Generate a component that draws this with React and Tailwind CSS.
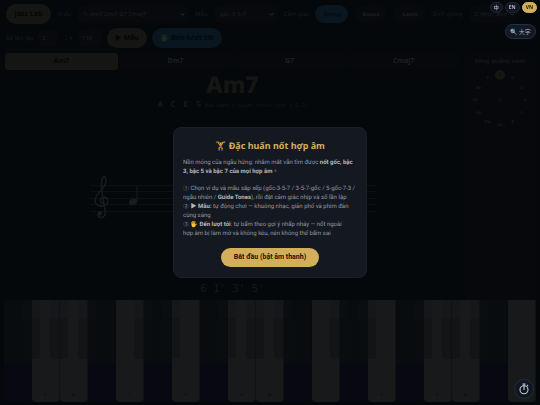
import React, { useState } from 'react';

const LANGS = ['中', 'EN', 'VN'];
const CHORDS = ['Am7', 'Dm7', 'G7', 'Cmaj7'];
const FEELS = ['Swing', 'Bossa', 'Latin'];
const FIFTHS = ['C', 'G', 'D', 'A', 'E', 'B', 'Gb', 'Db', 'Ab', 'Eb', 'Bb', 'F'];
const WHITE_KEYS = 'FGABCDEFGABCDEFGABC'.split('');
const CHORD_TONES = ['A', 'C', 'E', 'G'];
const DEGREES = ['6', "1'", "3'", "5'"];

const Select = ({ id, label, width, options }) => (
  <div className="flex items-center gap-1.5">
    <label htmlFor={id} className="text-[#181c20]">{label}</label>
    <div className={`relative ${width}`}>
      <select
        id={id}
        className="h-[18px] w-full appearance-none rounded-md bg-[#07090d] pl-1.5 text-[#1e2023]"
      >
        {options.map(o => <option key={o}>{o}</option>)}
      </select>
      <svg viewBox="0 0 6 4" className="pointer-events-none absolute right-1 top-2 h-[3px] w-[5px]">
        <path d="M.5.5 3 3 5.5.5" fill="none" stroke="#303236" strokeWidth="1.2" />
      </svg>
    </div>
  </div>
);

const Toolbar = () => {
  const [feel, setFeel] = useState('Swing');

  return (
    <div className="px-1.5 pt-1 text-[6px]">
      <div className="flex h-5 items-center gap-1.5 whitespace-nowrap">
        <button className="h-5 w-[45px] shrink-0 rounded-full bg-[#151513] text-[7px] font-bold text-[#050607]">
          Jazz Lab
        </button>
        <Select id="example" label="Ví dụ" width="w-28" options={['1: Am7 Dm7 G7 Cmaj7']} />
        <Select id="pattern" label="Mẫu" width="w-16" options={['gốc-3-5-7', '3-5-7-gốc', '5-gốc-7-3']} />
        <span className="text-[#181c20]">Cảm giác</span>
        {FEELS.map(f => (
          <button
            key={f}
            onClick={() => setFeel(f)}
            className={`h-[18px] w-[33px] shrink-0 rounded-full ${
              feel === f ? 'bg-[#09161f] text-[#03070a]' : 'bg-[#07090c] font-bold text-[#1c1e21]'
            }`}
          >
            {f}
          </button>
        ))}
        <Select id="transpose" label="Dịch giọng" width="w-[50px]" options={['C (thực âm)']} />
      </div>
      <div className="mt-1 flex h-5 items-center gap-[5px]">
        <label htmlFor="repeats" className="text-[#181c20]">Số lần lặp</label>
        <input id="repeats" defaultValue="2" className="h-[18px] w-5 rounded-md bg-[#07090d] pl-1 text-[#1e2023]" />
        <label htmlFor="tempo" className="text-[#181c20]">♩=</label>
        <input id="tempo" defaultValue="110" className="h-[18px] w-6 rounded-md bg-[#07090d] pl-1 text-[#1e2023]" />
        <button className="h-5 w-10 rounded-full bg-[#151513] text-[7px] font-bold text-[#050607]">
          ▶ Mẫu
        </button>
        <button className="h-5 w-[70px] rounded-full bg-[#09161f] text-[7px] font-bold text-[#03080c]">
          <span className="opacity-10">🖐</span> Đến lượt tôi
        </button>
      </div>
    </div>
  );
};

const Staff = () => (
  <svg viewBox="0 0 286 50" className="mt-16 h-[50px] w-[286px]" aria-label="A">
    {[9, 15, 22, 28, 35].map(y => (
      <path key={y} d={`M0 ${y}.5H286`} stroke="#0c1013" />
    ))}
    <g fill="none" stroke="#191c1f" strokeLinecap="round">
      <path d="M13 27C10 27 9 23 12.500 21.500C17 20 19.500 25 16.500 28.500C13 32 5 30 5 24C5 17 16 13 16 5C16 1 14.500-.5 13 1.500C10 6 11.500 12 12.500 19L15 34C16 39 14 41.500 11 41.500C8 41.500 7 38.500 8.500 37" strokeWidth="1.500" />
    </g>
    <circle cx="10" cy="37.500" r="2.200" fill="#191c1f" />
    <path d="M47 10V26" stroke="#191c1f" />
    <ellipse cx="43" cy="26" rx="4.200" ry="3.200" transform="rotate(-18 43 26)" fill="#191c1f" />
  </svg>
);

const CircleOfFifths = () => (
  <aside className="flex w-[71px] shrink-0 flex-col items-center rounded-md bg-[#06080b] pt-1">
    <h2 className="whitespace-nowrap text-[6px] font-bold leading-[8px] text-[#15171a]">Vòng quãng năm</h2>
    <svg viewBox="0 0 62 62" className="w-[62px]" fontSize="4" fontWeight="700" textAnchor="middle">
      <circle cx="31" cy="10" r="5" fill="#161613" />
      {FIFTHS.map((note, i) => {
        const angle = (i * Math.PI) / 6;
        return (
          <text
            key={note}
            x={31 + 25 * Math.sin(angle)}
            y={36 - 25 * Math.cos(angle)}
            fill={i === 0 ? '#07080a' : '#17191c'}
          >
            {note}
          </text>
        );
      })}
      <text x="31" y="37" fill="#17191c">C</text>
    </svg>
  </aside>
);

const Piano = () => (
  <div className="flex h-[102px] px-1">
    {WHITE_KEYS.map((note, i) => {
      const active = CHORD_TONES.includes(note);
      const hasSharp = 'FGACD'.includes(note) && i < WHITE_KEYS.length - 1;
      return (
        <button
          key={i}
          aria-label={note}
          className={`relative flex flex-1 items-end justify-center rounded-b-sm border-r pb-1 text-[4px] ${
            active
              ? 'border-[#101213] bg-[#18191a] text-[#0c0d0e]'
              : 'border-[#07090c] bg-linear-to-b from-[#080c0e] from-62% to-[#080812] to-62% text-transparent'
          }`}
        >
          {note}
          {hasSharp && (
            <span className="absolute -right-[9px] top-0 z-10 h-[59px] w-[18px] rounded-b-sm bg-linear-to-b from-[#101118]/25 from-30% to-[#0c0d10]/40 to-30%" />
          )}
        </button>
      );
    })}
  </div>
);

const IntroDialog = ({ onStart }) => (
  <div className="fixed inset-0 z-20 flex items-center justify-center">
    <div
      role="dialog"
      aria-labelledby="intro-title"
      className="w-[194px] rounded-lg border border-[#1b202b] bg-[#141821] px-[9px] pb-2.5 pt-3 text-[6px] leading-[9px] text-[#9499a3] [font-family:Roboto,'Noto_Sans_CJK_TC',sans-serif]"
    >
      <h1 id="intro-title" className="mb-1.5 text-center text-[9px] font-bold leading-3 text-[#d3af5c] [font-family:'Noto_Sans',sans-serif]">
        🏋️ Đặc huấn nốt hợp âm
      </h1>
      <p className="mb-2">
        Nền móng của ngẫu hứng: nhắm mắt vẫn tìm được <b className="text-[#b4b8bf]">nốt gốc, bậc 3, bậc 5 và bậc 7 của mọi hợp âm</b>。
      </p>
      <p>
        ① Chọn ví dụ và mẫu sắp xếp (gốc-3-5-7 / 3-5-7-gốc / 5-gốc-7-3 / ngẫu nhiên / <b className="text-[#b4b8bf]">Guide Tones</b>), rồi đặt cảm giác nhịp và số lần lặp
      </p>
      <p>
        ② <b className="text-[#b4b8bf]">▶ Mẫu:</b> tự động chơi — khuông nhạc, giản phổ và phím đàn cùng sáng
      </p>
      <p>
        ③ <b className="text-[#b4b8bf]">🖐 Đến lượt tôi</b>: tự bấm theo gợi ý nhấp nháy — nốt ngoài hợp&nbsp;âm bị làm mờ và không kêu, nên không thể bấm sai
      </p>
      <button
        onClick={onStart}
        className="mx-auto mt-2.5 block h-[19px] w-[98px] whitespace-nowrap rounded-full bg-[#d3af5c] text-[7px] font-bold text-[#18150e]"
      >
        Bắt đầu (bật âm thanh)
      </button>
    </div>
  </div>
);

const App = () => {
  const [lang, setLang] = useState('VN');
  const [introOpen, setIntroOpen] = useState(true);

  return (
    <div className="flex min-h-screen flex-col overflow-hidden bg-[#04080b] pb-[3px] [font-family:'Noto_Sans','Noto_Sans_CJK_TC',sans-serif] [text-rendering:geometricPrecision]">
      <Toolbar />
      <div className="mt-[5px] flex flex-1 gap-1 px-[5px]">
        <main className="flex min-w-0 flex-1 flex-col items-center">
          <div className="flex w-full gap-px">
            {CHORDS.map((chord, i) => (
              <button
                key={chord}
                className={`h-[17px] flex-1 rounded-[3px] text-[7px] font-bold ${
                  i === 0 ? 'bg-[#151513] text-[#060708]' : 'bg-[#06080b] text-[#1e2023]'
                }`}
              >
                {chord}
              </button>
            ))}
          </div>
          <h2 className="text-[23px] font-extrabold leading-[29px] text-[#151613]">Am7</h2>
          <div className="flex items-baseline [font-family:'DejaVu_Sans_Mono',monospace] text-[8px] font-bold leading-3">
            <span className="flex gap-2 text-[#17191c]">
              <span>A</span>
              <span className="text-[#101720]">C</span>
              <span>E</span>
              <span className="text-[#101720]">G</span>
            </span>
            <span className="ml-1 text-[5px] font-normal text-[#14171a]">Màu xanh = guide tones (bậc 3 &amp; 7)</span>
          </div>
          <Staff />
          <div className="mt-auto flex gap-1.5 pb-1 [font-family:'DejaVu_Sans_Mono',monospace] text-[11px] leading-[14px] text-[#12171b]">
            {DEGREES.map(d => <span key={d}>{d}</span>)}
          </div>
        </main>
        <CircleOfFifths />
      </div>
      <Piano />

      {introOpen && <IntroDialog onStart={() => setIntroOpen(false)} />}

      <div className="fixed right-[3px] top-0.5 z-30 flex gap-0.5">
        {LANGS.map(l => (
          <button
            key={l}
            onClick={() => setLang(l)}
            className={`h-[11px] rounded-full border px-[3px] text-[5px] font-bold leading-none ${
              lang === l ? 'border-[#d3af5c] bg-[#d3af5c] text-[#18150e]' : 'border-[#202734] bg-[#111620] text-[#aeb3bc]'
            }`}
          >
            {l}
          </button>
        ))}
      </div>
      <button className="fixed right-1 top-6 z-30 h-[15px] w-[31px] whitespace-nowrap rounded-full border border-[#273140] bg-[#111925] text-[6px] leading-none text-[#aeb3bc]">
        🔍 大字
      </button>
      <button
        aria-label="Timer"
        className="fixed bottom-1.5 right-1.5 z-30 flex size-5 items-center justify-center rounded-full border border-[#252d3a] bg-[#111722]"
      >
        <svg viewBox="0 0 12 12" className="size-3" fill="none" stroke="#c3c7cd" strokeWidth="1.100">
          <circle cx="6" cy="6.700" r="4" />
          <path d="M6 1V7M4.500 1H7.500M9 3 10 2" />
        </svg>
      </button>
    </div>
  );
};

export default App;
